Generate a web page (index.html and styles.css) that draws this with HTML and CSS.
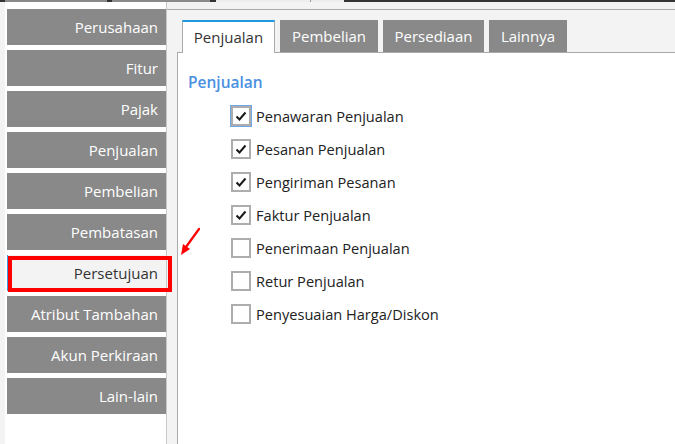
FILE: index.html
```html
<!DOCTYPE html>
<html lang="id">
<head>
<meta charset="utf-8">
<title>Pengaturan</title>
<link rel="stylesheet" href="styles.css">
</head>
<body>
<div class="topstrip"></div>
<div class="app">
  <nav class="sidebar">
    <div class="nav-item">Perusahaan</div>
    <div class="nav-item">Fitur</div>
    <div class="nav-item">Pajak</div>
    <div class="nav-item">Penjualan</div>
    <div class="nav-item">Pembelian</div>
    <div class="nav-item">Pembatasan</div>
    <div class="nav-item active">Persetujuan</div>
    <div class="nav-item">Atribut Tambahan</div>
    <div class="nav-item">Akun Perkiraan</div>
    <div class="nav-item">Lain-lain</div>
  </nav>
  <main class="main">
    <div class="tabs">
      <div class="tab active tab-sales">Penjualan</div>
      <div class="tab tab-purchase">Pembelian</div>
      <div class="tab tab-stock">Persediaan</div>
      <div class="tab tab-other">Lainnya</div>
    </div>
    <section class="panel">
      <h2 class="panel-title">Penjualan</h2>
      <ul class="checklist">
        <li class="check-row"><span class="box focus checked"><svg viewBox="0 0 16 16" class="tick"><path d="M3.5 8.5 L6.5 11.5 L12.5 4.5"/></svg></span>Penawaran Penjualan</li>
        <li class="check-row"><span class="box checked"><svg viewBox="0 0 16 16" class="tick"><path d="M3.5 8.5 L6.5 11.5 L12.5 4.5"/></svg></span>Pesanan Penjualan</li>
        <li class="check-row"><span class="box checked"><svg viewBox="0 0 16 16" class="tick"><path d="M3.5 8.5 L6.5 11.5 L12.5 4.5"/></svg></span>Pengiriman Pesanan</li>
        <li class="check-row"><span class="box checked"><svg viewBox="0 0 16 16" class="tick"><path d="M3.5 8.5 L6.5 11.5 L12.5 4.5"/></svg></span>Faktur Penjualan</li>
        <li class="check-row"><span class="box"></span>Penerimaan Penjualan</li>
        <li class="check-row"><span class="box"></span>Retur Penjualan</li>
        <li class="check-row"><span class="box"></span>Penyesuaian Harga/Diskon</li>
      </ul>
    </section>
  </main>
</div>
<div class="highlight"></div>
<svg class="arrow" viewBox="0 0 30 40" width="30" height="40">
  <line x1="24" y1="7" x2="11" y2="25" stroke="#ff0000" stroke-width="2.2" stroke-linecap="round"/>
  <polygon points="6,33 8,22 15,27" fill="#ff0000"/>
</svg>
</body>
</html>
```
FILE: styles.css
```css
* { box-sizing: border-box; }
html, body {
  margin: 0;
  padding: 0;
}
body {
  width: 675px;
  height: 444px;
  overflow: hidden;
  background: #f3f3f3;
  font-family: "Open Sans", "Noto Sans", sans-serif;
  position: relative;
}
.topstrip {
  height: 2px;
  background: linear-gradient(to right,
    #333 0 5px, #8a8a8a 5px 107px, #333 107px 112px, #8a8a8a 112px 210px,
    #333 210px 216px, #eeeeee 216px 310px, #999 310px 311px, #eeeeee 311px 344px, #333 344px);
}
.app {
  display: flex;
  height: 442px;
}
.sidebar {
  width: 162px;
  margin-left: 5px;
  padding: 7px 0 0 2px;
  background: #fff;
  border-right: 1px solid #c8c8c8;
  display: flex;
  flex-direction: column;
  gap: 5px;
}
.nav-item {
  height: 36px;
  line-height: 36px;
  background: #898989;
  color: #fff;
  text-align: right;
  padding-right: 8px;
  font-size: 15px;
  white-space: nowrap;
}
.nav-item.active {
  background: #f3f3f3;
  color: #333;
  border-left: 1px solid #3d9be0;
}
.main {
  flex: 1;
  margin-top: 7px;
  border-top: 1px solid #aaa;
  padding: 10px 0 0 10px;
  display: flex;
  flex-direction: column;
}
.tabs {
  display: flex;
  align-items: flex-start;
  gap: 5px;
  padding-left: 5px;
  height: 33px;
  border-bottom: 1px solid #aaa;
}
.tab {
  height: 32px;
  line-height: 32px;
  padding: 0;
  text-align: center;
  background: #898989;
  color: #fff;
  font-size: 15px;
  white-space: nowrap;
}
.tab-sales { width: 93px; }
.tab-purchase { width: 98px; }
.tab-stock { width: 101px; }
.tab-other { width: 78px; }
.tab.active {
  height: 33px;
  line-height: 30px;
  background: #fff;
  color: #333;
  border: 1px solid #aaa;
  border-top: 2px solid #1e9be0;
  border-bottom: none;
}
.panel {
  flex: 1;
  background: #fff;
  border-left: 1px solid #aaa;
  padding: 19px 0 0 10px;
}
.panel-title {
  margin: 0;
  font-size: 15.5px;
  line-height: 20px;
  font-weight: 600;
  color: #4a90e2;
}
.checklist {
  list-style: none;
  margin: 7px 0 0 0;
  padding: 0 0 0 43px;
}
.check-row {
  height: 33px;
  display: flex;
  align-items: center;
  gap: 5px;
  font-size: 14.6px;
  color: #222;
}
.box {
  width: 20px;
  height: 20px;
  border: 2px solid #adadad;
  background: #fff;
  display: flex;
  align-items: center;
  justify-content: center;
}
.box.focus {
  outline: 1px solid #6aa8e8;
}
.tick {
  width: 16px;
  height: 16px;
  fill: none;
  stroke: #1a1a1a;
  stroke-width: 2;
}
.highlight {
  position: absolute;
  left: 8px;
  top: 256px;
  width: 164px;
  height: 36px;
  border: 4px solid #ff0000;
}
.arrow {
  position: absolute;
  left: 175px;
  top: 222px;
}
```
